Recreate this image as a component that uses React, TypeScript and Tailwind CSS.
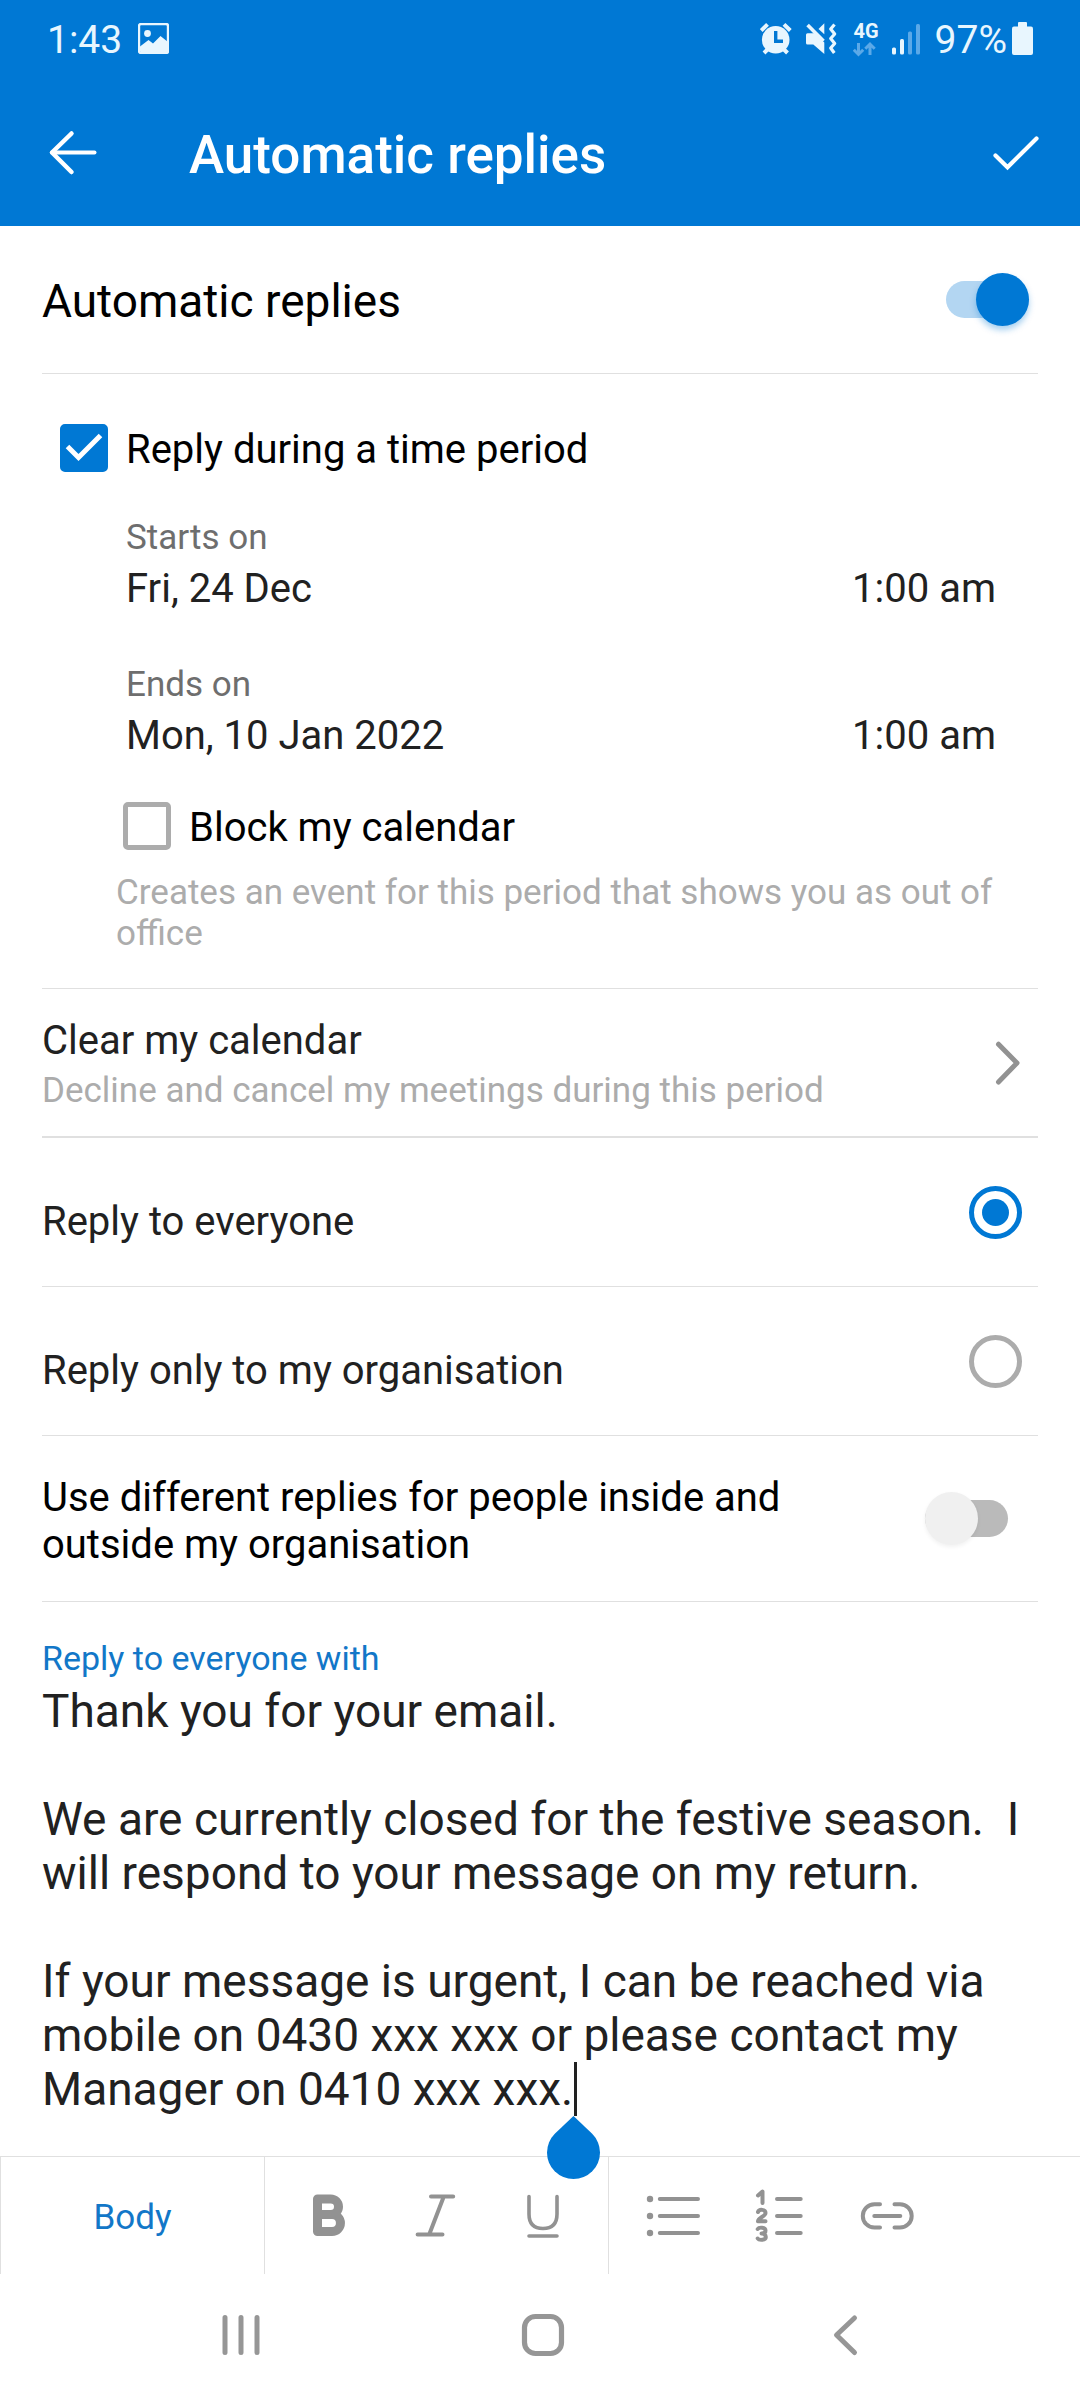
import type { InputHTMLAttributes, ReactNode } from "react";

const MESSAGE = `Thank you for your email.

We are currently closed for the festive season.  I will respond to your message on my return.

If your message is urgent, I can be reached via mobile on 0430 xxx xxx or please contact my Manager on 0410 xxx xxx.`;

function PictureIcon() {
  return (
    <svg width="31" height="31" viewBox="0 0 31 31" aria-hidden="true">
      <rect x="1" y="1" width="29" height="29" rx="2" fill="none" stroke="currentColor" strokeWidth="2.4" />
      <circle cx="9.5" cy="10.5" r="3.4" fill="currentColor" />
      <path d="M2 23.5 10.5 17l4.5 3.5L22.500 13 30 19v9q0 2-2 2H4q-2 0-2-2z" fill="currentColor" />
    </svg>
  );
}

function AlarmIcon() {
  return (
    <svg width="32" height="36" viewBox="0 0 32 36" aria-hidden="true">
      <g stroke="currentColor" strokeWidth="4">
        <path d="M1.200 8.500 7.500 2.400M30.300 8.500 24 2.400" />
        <path d="M9 26 4 31M22.500 26l5 5" />
      </g>
      <circle cx="15.7" cy="17.800" r="13.8" fill="currentColor" />
      <path d="M14 9h3.400v8.500H23v3.600h-9z" fill="#0078d4" />
    </svg>
  );
}

function MuteVibrateIcon() {
  return (
    <svg width="32" height="36" viewBox="0 0 32 36" aria-hidden="true">
      <path d="M2.500 11.300H10L19.300 20.500V32L8.300 22.500H2.500Q1 22.500 1 21V12.800Q1 11.300 2.500 11.300z" fill="currentColor" />
      <path d="M2.600 3 18.500 19" stroke="currentColor" strokeWidth="3.600" />
      <path d="M13.500 7 19.300 1.300v11z" fill="currentColor" />
      <path
        d="M29.500 2.500 25.700 7l4 5-4 4.500 4 5-4 4.500 3.600 5"
        fill="none"
        stroke="currentColor"
        strokeWidth="3.200"
        strokeLinejoin="round"
      />
    </svg>
  );
}

function DataIcon() {
  return (
    <svg width="24" height="18" viewBox="0 0 24 18" fill="none" stroke="#5ba9e8" strokeWidth="3" aria-hidden="true">
      <path d="M5.500 3v11.500M.800 9.800l4.700 4.700 4.700-4.700M17 15V4M12.300 8.700 17 4l4.700 4.700" />
    </svg>
  );
}

function SignalIcon() {
  return (
    <svg width="28" height="36" viewBox="0 0 28 36" aria-hidden="true">
      <g fill="currentColor">
        <rect x="0" y="25.500" width="4" height="7" rx="1.500" />
        <rect x="8" y="17" width="4" height="15.500" rx="1.500" />
      </g>
      <g fill="#5ba9e8">
        <rect x="16" y="9.500" width="4" height="23" rx="1.500" />
        <rect x="24" y="2" width="4" height="30.500" rx="1.500" />
      </g>
    </svg>
  );
}

function BatteryIcon() {
  return (
    <svg width="21" height="36" viewBox="0 0 21 36" fill="currentColor" aria-hidden="true">
      <rect x="6" y="0" width="9" height="8" rx="1" />
      <rect x="0" y="4.500" width="21" height="28.500" rx="2" />
    </svg>
  );
}

function StatusBar() {
  return (
    <div className="flex h-20 items-center pr-[47px] pl-[47px] text-[39px] leading-[48px] text-[#e8f6fe]">
      <span>1:43</span>
      <span className="mb-1 ml-4">
        <PictureIcon />
      </span>
      <div className="ml-auto flex items-center">
        <AlarmIcon />
        <span className="ml-[13px]">
          <MuteVibrateIcon />
        </span>
        <div className="ml-4 flex flex-col">
          <span className="text-[20px] leading-[18px] font-bold">4G</span>
          <DataIcon />
        </div>
        <span className="ml-[13px]">
          <SignalIcon />
        </span>
        <span className="ml-[15px]">97%</span>
        <span className="ml-[5px]">
          <BatteryIcon />
        </span>
      </div>
    </div>
  );
}

function AppBar() {
  return (
    <div className="flex h-[146px] items-center pr-8 pl-[41px] text-white">
      <button type="button" aria-label="Back" className="flex size-16 items-center justify-center">
        <svg width="50" height="48" viewBox="0 0 50 48" fill="none" stroke="currentColor" strokeLinecap="round" strokeLinejoin="round" aria-hidden="true">
          <path d="M4 23.500h42.500" strokeWidth="4" />
          <path d="M23.500 4.500 4 23.500l19.500 19.500" strokeWidth="4.500" />
        </svg>
      </button>
      <h1 className="ml-[84px] pt-1 text-[53px] leading-[64px] font-medium">Automatic replies</h1>
      <button type="button" aria-label="Save" className="ml-auto flex size-16 items-center justify-center">
        <svg width="50" height="40" viewBox="0 0 50 40" fill="none" stroke="currentColor" strokeWidth="4.200" strokeLinecap="round" strokeLinejoin="miter" aria-hidden="true">
          <path d="M4.500 22.500 16.500 34.300 45.500 5.500" />
        </svg>
      </button>
    </div>
  );
}

function Switch(props: InputHTMLAttributes<HTMLInputElement>) {
  return (
    <input
      type="checkbox"
      role="switch"
      className="relative h-[37px] w-[83px] shrink-0 appearance-none rounded-full bg-[#bababa] before:absolute before:-top-2 before:left-0 before:size-[53px] before:rounded-full before:bg-[#f0f0f0] before:shadow-[0_2px_4px_rgba(0,0,0,0.06)] checked:bg-[#b3d6f2] checked:before:right-0 checked:before:left-auto checked:before:bg-[#0078d4] checked:before:shadow-[0_4px_6px_rgba(0,120,212,0.35)]"
      {...props}
    />
  );
}

function Checkbox(props: InputHTMLAttributes<HTMLInputElement>) {
  return (
    <span className="grid size-12 shrink-0 *:col-start-1 *:row-start-1">
      <input
        type="checkbox"
        className="peer size-12 appearance-none rounded-[5px] border-[5px] border-[#acacac] checked:border-[#0078d4] checked:bg-[#0078d4]"
        {...props}
      />
      <svg viewBox="0 0 48 48" fill="none" stroke="white" strokeWidth="5" className="pointer-events-none invisible size-12 peer-checked:visible" aria-hidden="true">
        <path d="M7.500 22.500 18.500 33.500 40.500 11.500" />
      </svg>
    </span>
  );
}

function DateField({ label, date, time }: { label: string; date: string; time: string }) {
  return (
    <div>
      <div className="text-[35px] leading-10 text-[#6e6e6e]">{label}</div>
      <div className="flex justify-between text-[40px] leading-[62px] text-[#212121]">
        <button type="button">{date}</button>
        <button type="button">{time}</button>
      </div>
    </div>
  );
}

function RadioRow({ label, checked }: { label: string; checked?: boolean }) {
  return (
    <label className="flex h-[149px] items-center justify-between border-b border-[#e0e0e0] pr-4 text-[40px] leading-12 text-[#212121]">
      <span className="pt-5">{label}</span>
      <input
        type="radio"
        name="audience"
        defaultChecked={checked}
        className="grid size-[53px] appearance-none place-items-center rounded-full border-[5px] border-[#acacac] before:hidden before:size-[27px] before:rounded-full before:bg-[#0078d4] checked:border-[#0078d4] checked:before:block"
      />
    </label>
  );
}

function ToolButton({ label, children }: { label: string; children: ReactNode }) {
  return (
    <button type="button" aria-label={label} className="flex w-[107px] items-center justify-center">
      <svg width="57" height="57" viewBox="0 0 57 57" fill="none" stroke="currentColor" strokeWidth="4" strokeLinecap="round" strokeLinejoin="round" aria-hidden="true">
        {children}
      </svg>
    </button>
  );
}

function FormatBar() {
  return (
    <div className="flex h-[118px] border-t border-[#e0e0e0] text-[#929292]">
      <button type="button" className="w-[264px] border-l border-[#e0e0e0] text-[35px] leading-10 text-[#1277c8]">
        <span className="inline-block pt-1">Body</span>
      </button>
      <div className="flex border-l border-[#e0e0e0] px-[11px]">
        <ToolButton label="Bold">
          <path strokeWidth="9" d="M16.500 12V44.500M16.500 12H29.700a7.800 7.800 0 0 1 0 15.600H16.500M16.500 27.600H31a8.450 8.450 0 0 1 0 16.900H16.500" />
        </ToolButton>
        <ToolButton label="Italic">
          <path d="M23 9.500H45.200M9.600 47.500H34.500M35.800 9.500 21.200 47.500" />
        </ToolButton>
        <ToolButton label="Underline">
          <path strokeWidth="3.600" d="M14 9.500V27C14 36.500 19 41.500 28 41.500S42 36.500 42 27V9.500M14 49H42" />
        </ToolButton>
      </div>
      <div className="flex border-l border-[#e0e0e0] px-[11px]">
        <ToolButton label="Bulleted list">
          <path d="M14.800 12H53M14.800 29H53M14.800 46H53" />
          <g fill="currentColor" stroke="none">
            <circle cx="5" cy="12" r="3.200" />
            <circle cx="5" cy="29" r="3.200" />
            <circle cx="5" cy="46" r="3.200" />
          </g>
        </ToolButton>
        <ToolButton label="Numbered list">
          <path d="M25 12H48.700M25 29H48.700M25 46H48.700" />
          <path d="M6 8.500 10.500 4.500V16M6 25C7 22 13.500 22 13.500 26C13.500 29.500 6.500 30.500 6 34.200H13.500M5.700 42C7 40 13.500 40 13.500 43.500C13.500 46 11.500 46.600 9.500 46.600C11.500 46.600 13.800 47.500 13.800 50C13.800 53.500 7 53.500 5.700 51.500" />
        </ToolButton>
        <ToolButton label="Insert link">
          <path d="M21 17.200H15.500a11.700 11.700 0 0 0 0 23.400H21M35.500 17.200H41a11.700 11.700 0 0 1 0 23.400H35.500M15.300 28.900H41.300" />
        </ToolButton>
      </div>
    </div>
  );
}

function NavButton({ label, children }: { label: string; children: ReactNode }) {
  return (
    <button type="button" aria-label={label} className="flex w-[302px] items-center justify-center">
      <svg width="48" height="48" viewBox="0 0 48 48" fill="none" stroke="currentColor" strokeWidth="5" strokeLinecap="round" strokeLinejoin="round" aria-hidden="true">
        {children}
      </svg>
    </button>
  );
}

function SystemNav() {
  return (
    <nav className="flex h-[126px] justify-center pb-1 pl-1.5 text-[#969696]">
      <NavButton label="Recent apps">
        <path d="M8 6.500V41.500M24 6.500V41.500M40 6.500V41.500" />
      </NavButton>
      <NavButton label="Home">
        <rect x="5.500" y="5.500" width="37" height="37" rx="11" strokeWidth="5.200" />
      </NavButton>
      <NavButton label="Back">
        <path d="M33.500 7 15.500 24 33.500 41.500" />
      </NavButton>
    </nav>
  );
}

export default function App() {
  return (
    <div className="flex min-h-screen flex-col bg-white font-['Roboto',sans-serif] text-black">
      <header className="bg-[#0078d4]">
        <StatusBar />
        <AppBar />
      </header>

      <main className="flex-1 px-[42px] pb-10">
        <label className="flex h-[148px] items-center justify-between border-b border-[#e0e0e0] pr-[9px] text-[46px] leading-[56px]">
          <span className="pt-0.5">Automatic replies</span>
          <Switch defaultChecked />
        </label>

        <section className="border-b border-[#e0e0e0] pt-[50px] pb-[34px] pl-[18px]">
          <label className="flex h-12 items-center text-[40px] leading-12">
            <Checkbox defaultChecked />
            <span className="pt-1 pl-[18px]">Reply during a time period</span>
          </label>
          <div className="mt-[46px] flex flex-col gap-[45px] pr-[42px] pl-[66px]">
            <DateField label="Starts on" date="Fri, 24 Dec" time="1:00 am" />
            <DateField label="Ends on" date="Mon, 10 Jan 2022" time="1:00 am" />
          </div>
          <label className="mt-[35px] ml-[63px] flex h-12 items-center text-[40px] leading-12">
            <Checkbox aria-describedby="block-hint" />
            <span className="pt-1 pl-[18px]">Block my calendar</span>
          </label>
          <p id="block-hint" className="mt-[22px] pr-[30px] pl-14 text-[35px] leading-[41px] text-[#acacac]">
            Creates an event for this period that shows you as out of office
          </p>
        </section>

        <button type="button" className="flex h-[149px] w-full items-center justify-between border-b-2 border-[#e0e0e0] pr-[18px] text-left">
          <span className="flex flex-col pt-1.5">
            <span className="text-[40px] leading-[50px] text-[#212121]">Clear my calendar</span>
            <span className="text-[35px] leading-[50px] text-[#acacac]">Decline and cancel my meetings during this period</span>
          </span>
          <svg width="25" height="44" viewBox="0 0 25 44" fill="none" stroke="#929292" strokeWidth="5" strokeLinecap="round" strokeLinejoin="round" aria-hidden="true">
            <path d="M3.500 3.200 22 22 3.500 41" />
          </svg>
        </button>

        <RadioRow label="Reply to everyone" checked />
        <RadioRow label="Reply only to my organisation" />

        <label className="flex h-[166px] items-center justify-between border-b border-[#e0e0e0] pr-[30px] text-[40px] leading-[47px]">
          <span className="max-w-[800px] pt-1">Use different replies for people inside and outside my organisation</span>
          <Switch />
        </label>

        <div className="pt-9">
          <label htmlFor="reply" className="block text-[34px] leading-10 text-[#1277c8]">
            Reply to everyone with
          </label>
          <div className="relative mt-1.5">
            <textarea
              id="reply"
              rows={8}
              defaultValue={MESSAGE}
              className="block w-full resize-none overflow-hidden bg-transparent text-[46px] leading-[54px] text-[#212121] caret-transparent outline-none"
            />
            <span className="absolute bottom-0 left-[532px] h-[54px] w-[3px] bg-[#212121]" />
            <svg width="54" height="64" viewBox="0 0 54 64" className="absolute top-full left-[505px] z-10" aria-hidden="true">
              <path d="M26.500 0 45.200 17.800A26.500 26.500 0 1 1 7.800 17.800z" fill="#0078d4" />
            </svg>
          </div>
        </div>
      </main>

      <footer>
        <FormatBar />
        <SystemNav />
      </footer>
    </div>
  );
}
